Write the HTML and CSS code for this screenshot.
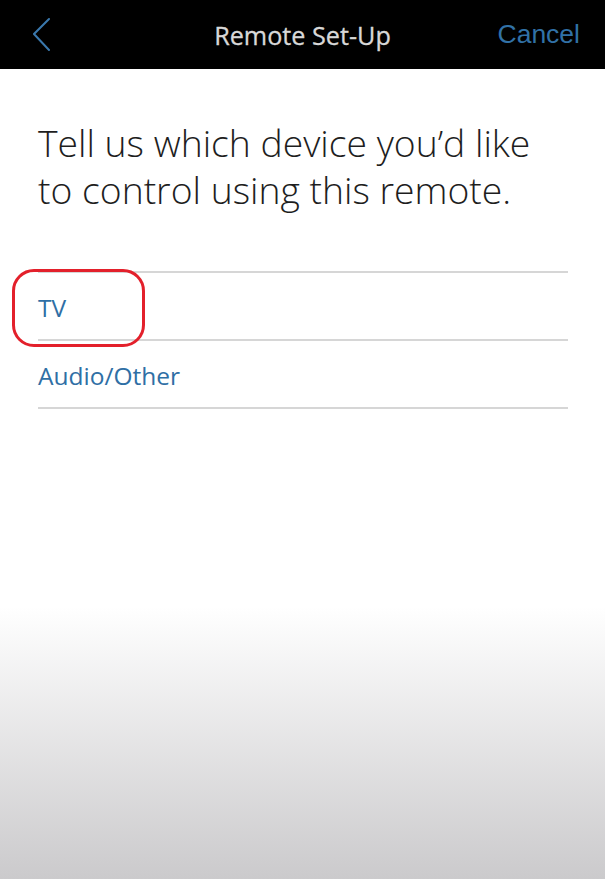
FILE: index.html
```html
<!DOCTYPE html>
<html>
<head>
<meta charset="utf-8">
<link rel="stylesheet" href="styles.css">
</head>
<body>
<div class="screen">
  <header class="topbar">
    <div class="back">
      <svg width="20" height="36" viewBox="0 0 20 36"><polyline points="16,2 1,17 16,33" fill="none" stroke="#3a78ad" stroke-width="2" stroke-linecap="round" stroke-linejoin="miter"/></svg>
    </div>
    <div class="title">Remote Set-Up</div>
    <div class="cancel">Cancel</div>
  </header>
  <main class="content">
    <h1 class="prompt">Tell us which device you’d like to control using this remote.</h1>
    <ul class="options">
      <li class="option highlighted"><span>TV</span><span class="ring"></span></li>
      <li class="option"><span>Audio/Other</span></li>
    </ul>
  </main>
</div>
</body>
</html>
```
FILE: styles.css
```css
html, body {
  margin: 0;
  padding: 0;
}
body {
  width: 605px;
  height: 879px;
  overflow: hidden;
  font-family: "Open Sans", "Noto Sans", sans-serif;
}
.screen {
  height: 879px;
  display: flex;
  flex-direction: column;
  background: linear-gradient(to bottom, #efefef 0px, #ffffff 22px, #ffffff 69%, #cbcacc 100%);
}
.topbar {
  height: 69px;
  flex: none;
  background: #000;
  display: grid;
  grid-template-columns: 1fr auto 1fr;
  align-items: center;
}
.back {
  padding-left: 33px;
  display: flex;
  align-items: center;
  padding-top: 1px;
}
.back svg {
  display: block;
}
.title {
  color: #d8d8d8;
  font-size: 25.2px;
  font-weight: 500;
  -webkit-text-stroke: 0.3px #d8d8d8;
}
.cancel {
  justify-self: end;
  padding-right: 25px;
  color: #3171a6;
  font-family: "Liberation Sans", Arial, sans-serif;
  font-size: 26.5px;
}
.content {
  padding: 0 37px 0 38px;
}
.prompt {
  margin: 50px 0 0;
  font-size: 37.3px;
  font-weight: 300;
  line-height: 47px;
  color: #1e1e1e;
  width: 520px;
}
.options {
  list-style: none;
  margin: 58px 0 0;
  padding: 0;
  border-top: 2px solid #d6d6d6;
}
.option {
  position: relative;
  height: 64px;
  border-bottom: 2px solid #d6d6d6;
  display: flex;
  align-items: center;
  color: #2f6fa5;
  font-size: 24.5px;
  padding-top: 2px;
  box-sizing: content-box;
}
.ring {
  position: absolute;
  left: -26px;
  top: -4px;
  width: 127px;
  height: 72px;
  border: 3.5px solid #e3202b;
  border-radius: 22px;
}
```
